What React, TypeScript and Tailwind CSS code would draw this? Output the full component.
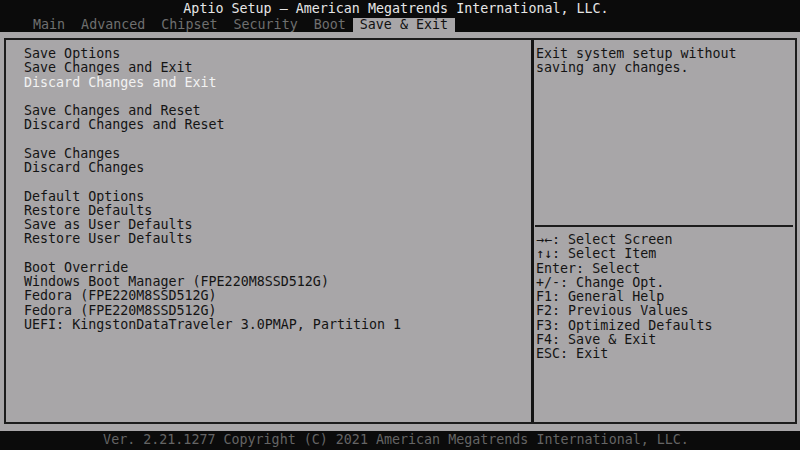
import React from "react";

const mono = { fontFamily: '"DejaVu Sans Mono", "Liberation Mono", monospace' };

const leftItems: (string | null)[] = [
  "Save Options",
  "Save Changes and Exit",
  "#Discard Changes and Exit",
  null,
  "Save Changes and Reset",
  "Discard Changes and Reset",
  null,
  "Save Changes",
  "Discard Changes",
  null,
  "Default Options",
  "Restore Defaults",
  "Save as User Defaults",
  "Restore User Defaults",
  null,
  "Boot Override",
  "Windows Boot Manager (FPE220M8SSD512G)",
  "Fedora (FPE220M8SSD512G)",
  "Fedora (FPE220M8SSD512G)",
  "UEFI: KingstonDataTraveler 3.0PMAP, Partition 1",
];

const help = [
  "→←: Select Screen",
  "↑↓: Select Item",
  "Enter: Select",
  "+/-: Change Opt.",
  "F1: General Help",
  "F2: Previous Values",
  "F3: Optimized Defaults",
  "F4: Save & Exit",
  "ESC: Exit",
];

const tabs = ["Main", "Advanced", "Chipset", "Security", "Boot"];

export default function App() {
  return (
    <div
      className="w-[800px] h-[450px] flex flex-col bg-[#0b0b0b] text-[13.33px] leading-[14.25px] overflow-hidden"
      style={mono}
    >
      <div className="h-[18px] flex items-center justify-center text-[#e6e6e6]">
        <span className="ml-[-8px]">Aptio Setup – American Megatrends International, LLC.</span>
      </div>
      <div className="h-[14px] flex pl-[25px]">
        {tabs.map((t) => (
          <div key={t} className="px-[8px] h-[14px] leading-[14px] text-[#6f6f6f]">
            {t}
          </div>
        ))}
        <div className="ml-[-1px] px-[7px] h-[14px] leading-[14px] bg-[#a8a6a8] text-[#111]">Save &amp; Exit</div>
      </div>
      <div className="h-[399px] bg-[#a8a6a8] pt-[6px] pl-[4px] pr-[3px] pb-[7px] flex">
        <div className="flex-1 border-2 border-[#1c1c1c] flex">
          <div className="w-[528px] border-r-[3px] border-[#141414] pl-[18px] pt-[7px] text-[#141414]">
            {leftItems.map((it, i) =>
              it === null ? (
                <div key={i} className="h-[14.25px]" />
              ) : it.startsWith("#") ? (
                <div key={i} className="h-[14.25px] whitespace-pre text-[#f2f2f2]">
                  {it.slice(1)}
                </div>
              ) : (
                <div key={i} className="h-[14.25px] whitespace-pre">
                  {it}
                </div>
              )
            )}
          </div>
          <div className="flex-1 flex flex-col text-[#141414]">
            <div className="h-[185px] pl-[2px] pt-[7px]">
              <div className="h-[14.25px]">Exit system setup without</div>
              <div className="h-[14.25px]">saving any changes.</div>
            </div>
            <div className="h-[2px] bg-[#1c1c1c] ml-[1px] mr-[2px]" />
            <div className="pl-[2px] pt-[6px]">
              {help.map((h) => (
                <div key={h} className="h-[14.25px] whitespace-pre">
                  {h}
                </div>
              ))}
            </div>
          </div>
        </div>
      </div>
      <div className="flex-1 flex items-center justify-center text-[#656565]">
        <span className="ml-[-8px]">Ver. 2.21.1277 Copyright (C) 2021 American Megatrends International, LLC.</span>
      </div>
    </div>
  );
}
